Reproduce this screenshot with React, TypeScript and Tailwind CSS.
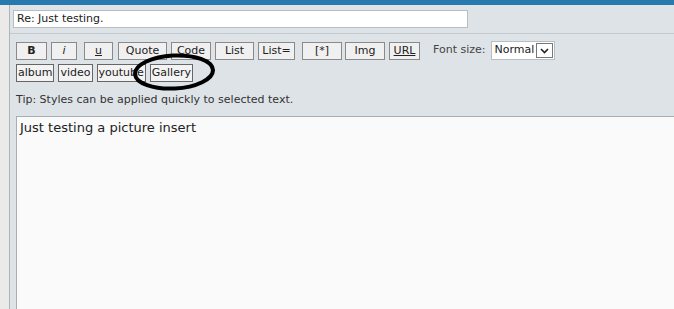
import React from "react";

const btn =
  "h-[18px] border border-[#8a8a8a] bg-[#f0f0f0] text-[11px] leading-[16px] text-[#222] flex items-center justify-center shrink-0";

export default function App() {
  const row1: { label: React.ReactNode; cls: string }[] = [
    { label: <b>B</b>, cls: "w-[31px]" },
    { label: <i>i</i>, cls: "w-[26px] ml-[4px]" },
    { label: <u>u</u>, cls: "w-[29px] ml-[7px]" },
    { label: "Quote", cls: "w-[49px] ml-[5px]" },
    { label: "Code", cls: "w-[40px] ml-[4px]" },
    { label: "List", cls: "w-[39px] ml-[4px]" },
    { label: "List=", cls: "w-[37px] ml-[4px]" },
    { label: "[*]", cls: "w-[40px] ml-[7px]" },
    { label: "Img", cls: "w-[40px] ml-[3px]" },
    { label: <u>URL</u>, cls: "w-[31px] ml-[4px]" },
  ];
  return (
    <div
      className="relative w-full h-[309px] overflow-hidden flex flex-col bg-[#dee3e7]"
      style={{ fontFamily: '"DejaVu Sans", Verdana, sans-serif' }}
    >
      <div className="h-[5px] bg-[#2879ae] shrink-0" />
      <div className="flex flex-1 min-h-0">
        <div className="w-[10px] bg-[#ebeae8] border-r border-[#aab6be] shrink-0" />
        <div className="flex-1 flex flex-col min-w-0">
          <div className="pt-[5px] pl-[3px] pb-[5px] border-b border-[#c3c9cd]">
            <div className="w-[455px] h-[18px] bg-white border border-[#b8bdc2] px-[3px] text-[11px] leading-[16px] text-[#222]">
              Re: Just testing.
            </div>
          </div>
          <div className="pl-[6px] pt-[7px] flex items-center">
            {row1.map((b, i) => (
              <div key={i} className={`${btn} ${b.cls}`}>
                {b.label}
              </div>
            ))}
            <span className="ml-[13px] text-[11px] text-[#444]">Font size:</span>
            <div className="ml-[6px] h-[19px] flex items-center bg-white border border-[#b8bdc2]">
              <span className="pl-[2px] pr-[2px] text-[11px] text-[#222]">Normal</span>
              <div className="w-[17px] h-[15px] mr-[1px] border border-[#777] flex items-center justify-center">
                <svg width="9" height="6" viewBox="0 0 9 6">
                  <path d="M1 1 L4.5 4.5 L8 1" stroke="#222" strokeWidth="1.6" fill="none" />
                </svg>
              </div>
            </div>
          </div>
          <div className="pl-[6px] pt-[4px] flex items-center gap-[4px]">
            {["album", "video", "youtube", "Gallery"].map((l) => (
              <div
                key={l}
                className="h-[18px] border border-[#666] bg-[#f3f3f3] px-[1px] text-[11px] leading-[16px] text-[#222]"
              >
                {l}
              </div>
            ))}
          </div>
          <div className="pl-[6px] pt-[11px] text-[11px] text-[#333] leading-[14px]">
            Tip: Styles can be applied quickly to selected text.
          </div>
          <div className="ml-[6px] mt-[9px] flex-1 bg-[#fafafa] border-t border-l border-[#a8adb2] pl-[3px] pt-[1px] text-[13px] text-[#222]">
            Just testing a picture insert
          </div>
        </div>
      </div>
      <svg
        className="absolute left-[132px] top-[53px]"
        width="84"
        height="40"
        viewBox="0 0 84 40"
      >
        <ellipse cx="42" cy="19" rx="39" ry="16.5" stroke="#000" strokeWidth="4" fill="none" transform="rotate(-3 42 19)" />
      </svg>
    </div>
  );
}
